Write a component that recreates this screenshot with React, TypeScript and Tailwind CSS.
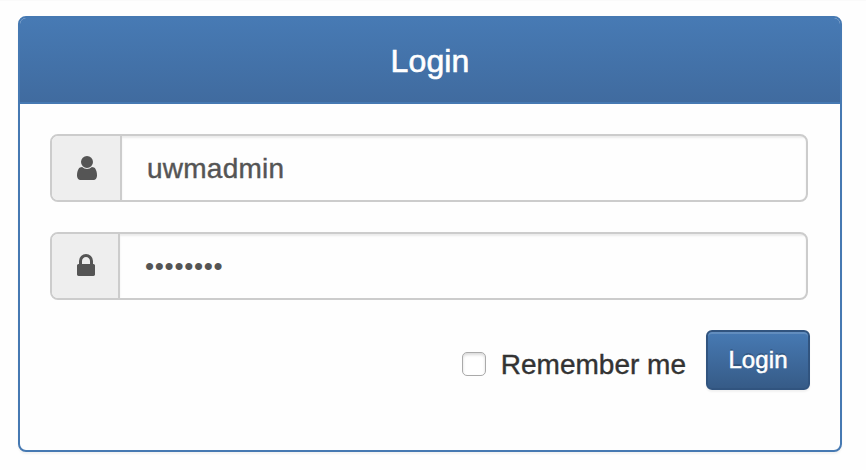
function UserIcon() {
  return (
    <svg className="h-7 w-7 fill-[#555]" viewBox="0 0 1792 1792" aria-hidden="true">
      <path d="M1536 1399q0 109-62.5 187t-150.5 78h-854q-88 0-150.5-78t-62.5-187q0-85 8.5-160.5t31.5-152 58.5-131 94-89 134.5-34.5q131 128 313 128t313-128q76 0 134.5 34.5t94 89 58.5 131 31.5 152 8.5 160.5zm-256-887q0 159-112.5 271.5t-271.5 112.5-271.5-112.5-112.5-271.5 112.5-271.5 271.5-112.5 271.5 112.5 112.5 271.5z" />
    </svg>
  );
}

function LockIcon() {
  return (
    <svg className="h-7 w-[18px] fill-[#555]" viewBox="0 0 1152 1792" aria-hidden="true">
      <path d="M320 768h512v-192q0-106-75-181t-181-75-181 75-75 181v192zm832 96v576q0 40-28 68t-68 28h-960q-40 0-68-28t-28-68v-576q0-40 28-68t68-28h32v-192q0-184 132-316t316-132 316 132 132 316v192h32q40 0 68 28t28 68z" />
    </svg>
  );
}

const field =
  "flex h-[68px] w-[758px] overflow-hidden rounded-lg border-2 border-[#ccc] bg-[#fefefe] text-[28px] leading-8 text-[#555]";

export default function App() {
  return (
    <main className="h-[470px] w-[866px] border-t border-[#fafafa] bg-[#fefefe] px-[18px] pt-[15px] font-['Liberation_Sans',Arial,sans-serif]">
      <section className="h-[436px] w-[824px] rounded-lg border-2 border-[#4679b2] bg-[#fefefe] shadow-[0_2px_2px_rgba(0,0,0,0.05)]">
        <header className="flex h-[86px] items-center justify-center rounded-t-md border-b-2 border-[#4679b2] bg-linear-to-b from-[#477ab4] to-[#406b9f]">
          <h1 className="pt-px text-[32px] leading-9 tracking-[0.1px] text-white [-webkit-text-stroke:0.6px_white]">Login</h1>
        </header>
        <form className="px-[30px] pt-[30px]" onSubmit={(e) => e.preventDefault()}>
          <div className={field}>
            <span className="flex w-[70px] items-center justify-center border-r-2 border-[#ccc] bg-[#eee] pl-px">
              <UserIcon />
            </span>
            <span className="flex flex-1 items-center pt-0.5 pl-[25px] tracking-[0.25px] shadow-[inset_0_2px_2px_rgba(0,0,0,0.075)] [-webkit-text-stroke:0.4px_#555]">
              uwmadmin
            </span>
          </div>
          <div className={`${field} mt-[30px]`}>
            <span className="flex w-[68px] items-center justify-center border-r-2 border-[#ccc] bg-[#eee] pl-px">
              <LockIcon />
            </span>
            <span className="flex flex-1 items-center pl-[25px] text-[26px] tracking-[0.7px] shadow-[inset_0_2px_2px_rgba(0,0,0,0.075)]">
              ••••••••
            </span>
          </div>
          <div className="flex w-[760px] justify-end pt-[30px]">
            <label className="mr-5 flex h-[60px] items-center pt-2 text-[28px] leading-8 text-[#333]">
              <input
                type="checkbox"
                className="mr-[15px] h-6 w-6 appearance-none rounded-[5px] border border-[#aaa] bg-white shadow-[inset_0_2px_3px_rgba(0,0,0,0.15)]"
              />
              <span className="pt-px [-webkit-text-stroke:0.4px_#333]">Remember me</span>
            </label>
            <button className="h-[60px] w-[104px] rounded-md border-2 border-[#31547f] bg-linear-to-b from-[#477ab4] to-[#365b87] text-2xl tracking-[0.1px] text-white shadow-[inset_0_2px_0_rgba(255,255,255,0.15),0_2px_2px_rgba(0,0,0,0.05)] [-webkit-text-stroke:0.5px_white] [text-shadow:0_-2px_0_rgba(0,0,0,0.2)]">
              Login
            </button>
          </div>
        </form>
      </section>
    </main>
  );
}
